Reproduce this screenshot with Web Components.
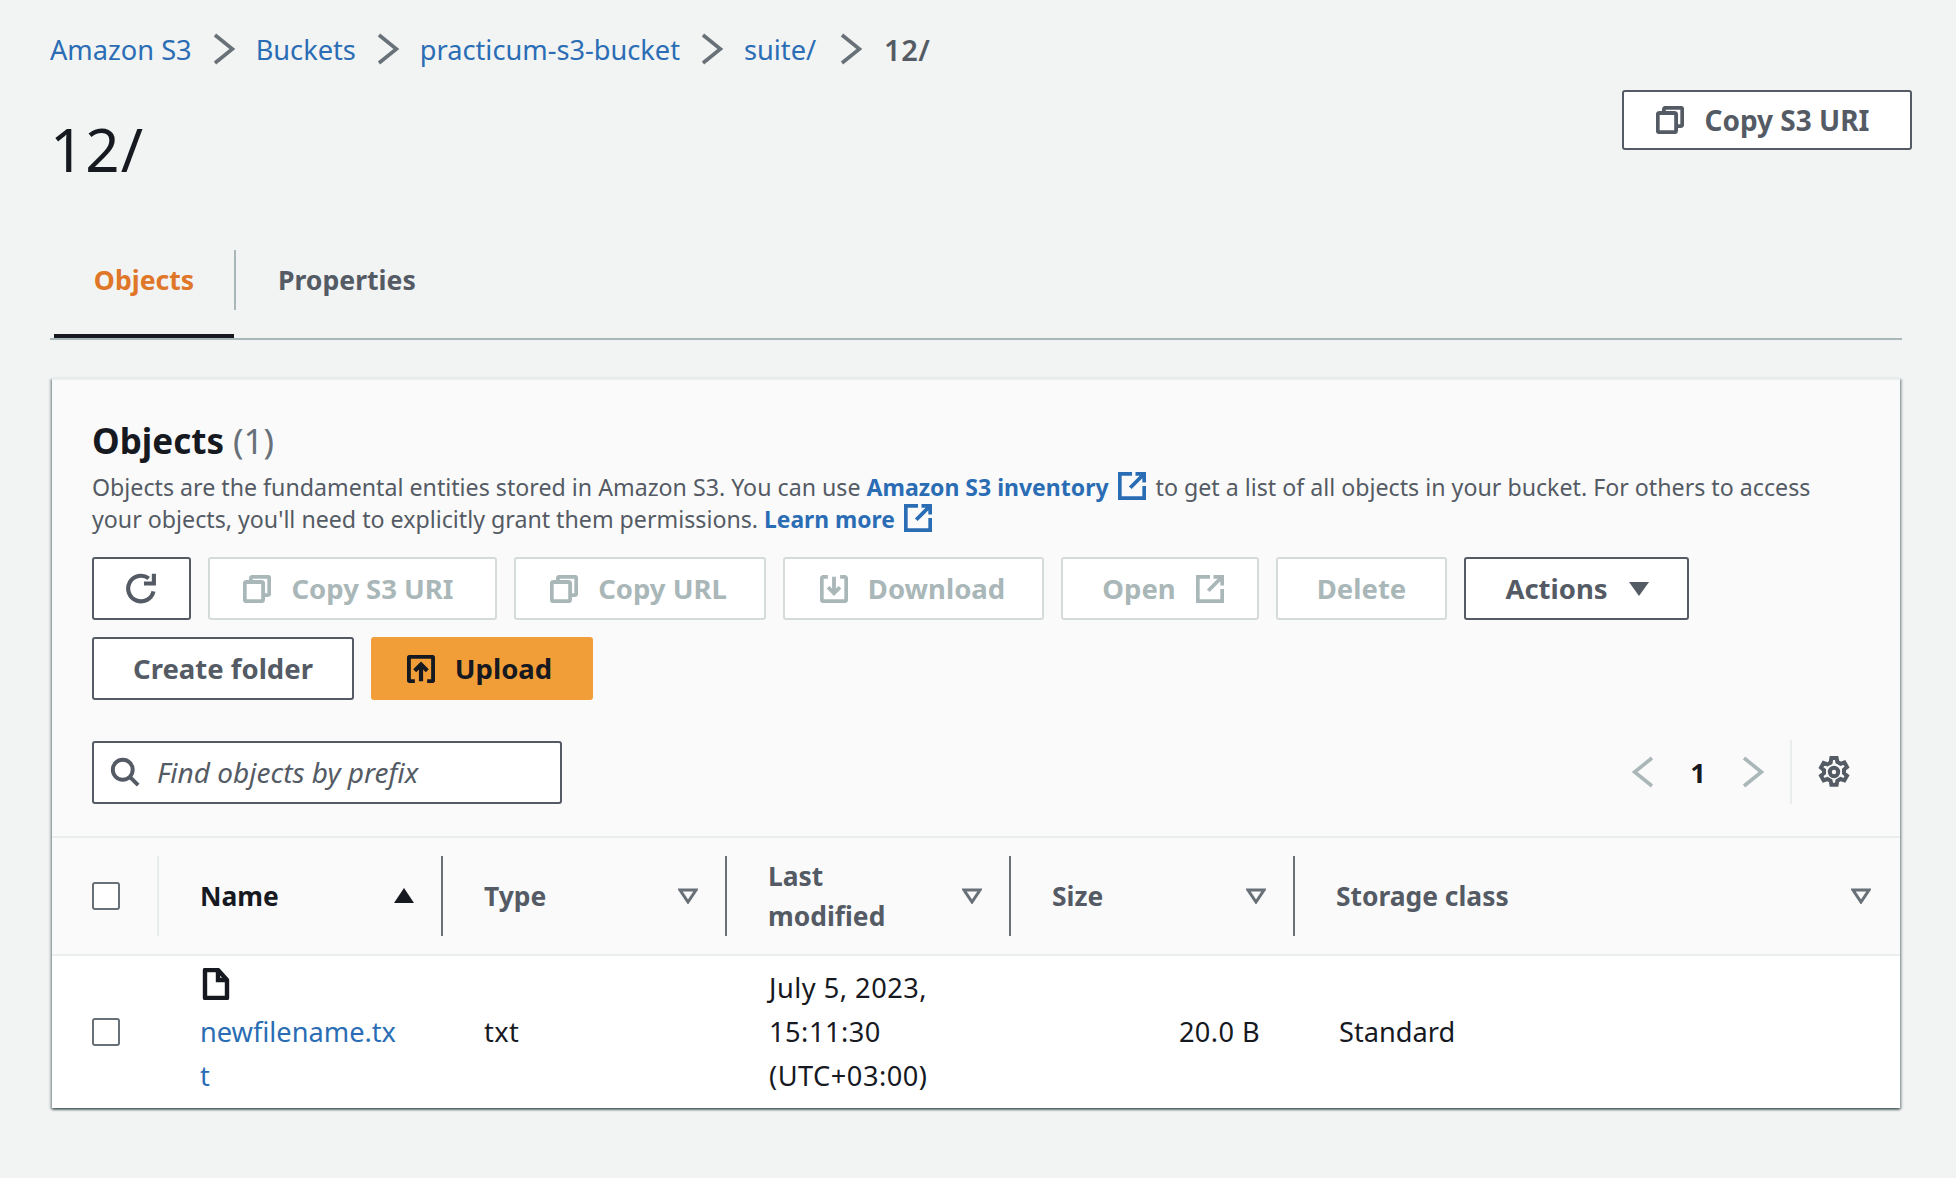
<!DOCTYPE html>
<html lang="en">
<head>
<meta charset="utf-8">
<title>12/ - S3 bucket</title>
<style>
  html, body { margin: 0; background: #f2f3f3; }
  body { font-family: "Noto Sans", "Liberation Sans", sans-serif; color: #16191f; }
</style>
</head>
<body>
<s3-page>
  <s3-breadcrumbs></s3-breadcrumbs>
  <s3-header title="12/"></s3-header>
  <s3-tabs></s3-tabs>
  <s3-panel>
    <s3-toolbar slot="toolbar"></s3-toolbar>
    <s3-filter slot="filter"></s3-filter>
    <s3-table slot="table"></s3-table>
  </s3-panel>
</s3-page>

<script>
const ICONS = {
  copy: '<path d="M4.500 4V2c0-.6.4-1 1-1H14c.6 0 1 .4 1 1v8.500c0 .6-.4 1-1 1h-2.500" fill="none"/><rect x="1" y="4" width="10.500" height="11" rx="1" fill="none"/>',
  refresh: '<path d="M13.800 9.400A6.200 6.200 0 1 1 11.500 3.100" fill="none"/><path d="M14 .8v4.800H9.200" fill="none"/>',
  download: '<path d="M4.500 1H2.200C1.500 1 1 1.500 1 2.200v11.600c0 .7.5 1.200 1.200 1.200h11.600c.7 0 1.200-.5 1.200-1.200V2.200c0-.7-.5-1.200-1.200-1.200h-2.300" fill="none"/><path d="M8 1v9M4.600 7 8 10.400 11.400 7" fill="none"/>',
  external: '<path d="M8 1H1v14h14V8" fill="none"/><path d="M7 9 15 1M10 1h5v5" fill="none"/>',
  upload: '<path d="M4.500 15H2.200C1.500 15 1 14.500 1 13.800V2.200C1 1.500 1.500 1 2.200 1h11.600c.7 0 1.200.5 1.200 1.200v11.600c0 .7-.5 1.200-1.200 1.200h-2.300" fill="none"/><path d="M8 15V5.500M4.400 9 8 5.400 11.600 9" fill="none"/>',
  search: '<circle cx="6.800" cy="6.800" r="5.300" fill="none"/><path d="M10.700 10.700 15 15" fill="none"/>',
  gear: '<path d="M6.700 1h2.600l.4 2 1.600.9 1.900-.7 1.300 2.300-1.500 1.300v1.800l1.500 1.300-1.300 2.300-1.900-.7-1.600.9-.4 2H6.700l-.4-2-1.600-.9-1.900.7-1.300-2.300 1.500-1.300V7.100L1.500 5.800l1.300-2.300 1.900.7 1.600-.9z" fill="none"/><circle cx="8" cy="8" r="2.100" fill="none"/>',
  file: '<path d="M2.500 1H9l4.500 5v9h-11z" fill="none" stroke-linejoin="round"/><path d="M9 1v5h4.500" fill="none"/>',
  left: '<path d="M12.500 1 3.800 8l8.700 7" fill="none"/>',
  right: '<path d="M3.500 1 12.200 8l-8.700 7" fill="none"/>',
};

function icon(name, size, stroke = 2) {
  return `<svg width="${size}" height="${size}" viewBox="0 0 16 16" stroke="currentColor" stroke-width="${stroke}" aria-hidden="true">${ICONS[name]}</svg>`;
}

class S3Page extends HTMLElement {
  constructor() {
    super();
    this.attachShadow({ mode: 'open' });
    this.shadowRoot.innerHTML = `
      <style>
        :host { display: block; padding: 27px 44px 69px 50px; font-size: 27.2px; }
      </style>
      <slot></slot>
    `;
  }
}

class S3Breadcrumbs extends HTMLElement {
  constructor() {
    super();
    this.attachShadow({ mode: 'open' });
    const parts = ['Amazon S3', 'Buckets', 'practicum-s3-bucket', 'suite/'];
    this.shadowRoot.innerHTML = `
      <style>
        :host { display: flex; align-items: center; height: 44px; color: #687078; }
        a { color: #2a6db5; text-decoration: none; }
        svg { margin: 0 16px; display: block; }
        a:nth-of-type(4) + svg { margin-left: 19px; margin-right: 15px; }
        span { margin-left: 2px; color: #545b64; font-weight: 600; font-size: 29px; letter-spacing: .5px; }
      </style>
      ${parts.map(p => `<a href="#">${p}</a>${icon('right', 32, 1.8)}`).join('')}
      <span>12/</span>
    `;
  }
}

class S3Button extends HTMLElement {
  constructor() {
    super();
    this.attachShadow({ mode: 'open' });
    this.shadowRoot.innerHTML = `
      <style>
        :host { display: inline-flex; box-sizing: border-box; height: 63px; padding: 0 40px; align-items: center; justify-content: center;
          gap: 20px; border: 2px solid #545b64; border-radius: 3px; background: #fff; color: #545b64;
          font-weight: 700; font-size: 27.500px; white-space: nowrap; }
        :host([disabled]) { border-color: #d5dbdb; color: #aab7b8; }
        :host([primary]) { background: #f29e38; border-color: #f29e38; color: #16191f; }
        ::slotted(svg) { display: block; flex: none; }
      </style>
      <slot></slot>
    `;
  }
}

class S3Header extends HTMLElement {
  constructor() {
    super();
    this.attachShadow({ mode: 'open' });
    this.shadowRoot.innerHTML = `
      <style>
        :host { display: flex; justify-content: space-between; align-items: flex-start; height: 100px; margin-top: 19px; }
        h1 { margin: 27px 0 0 0; font-size: 60px; line-height: 64px; font-weight: 400; letter-spacing: 1px; }
        s3-button { height: 60px; width: 290px; padding: 0 8px 0 0; font-size: 28px; }
      </style>
      <h1>${this.getAttribute('title')}</h1>
      <s3-button>${icon('copy', 28, 2.2)}<span>Copy S3 URI</span></s3-button>
    `;
  }
}

class S3Tabs extends HTMLElement {
  constructor() {
    super();
    this.attachShadow({ mode: 'open' });
    this.shadowRoot.innerHTML = `
      <style>
        :host { display: flex; height: 89px; margin: 60px 10px 39px 4px; position: relative; font-weight: 700; font-size: 26.600px; box-sizing: border-box; }
        :host::after { content: ""; position: absolute; left: -4px; right: 0; top: 88px; height: 2px; background: #aab7b8; }
        .tab { height: 84px; display: flex; align-items: flex-start; padding-top: 12px; box-sizing: border-box; }
        .tab span { display: block; line-height: 36px; }
        .active { width: 180px; justify-content: center; color: #e07628; border-bottom: 4px solid #16191f; height: 88px; }
        .sep { width: 2px; height: 60px; background: #aab7b8; }
        .other { padding-left: 42px; color: #545b64; }
      </style>
      <div class="tab active"><span>Objects</span></div>
      <div class="sep"></div>
      <div class="tab other"><span>Properties</span></div>
    `;
  }
}

class S3Panel extends HTMLElement {
  constructor() {
    super();
    this.attachShadow({ mode: 'open' });
    this.shadowRoot.innerHTML = `
      <style>
        :host { display: block; margin: 0 12px 0 2px; background: #fafafa; border-top: 2px solid #eaeded;
          box-shadow: 0 2px 2px 0 rgba(0,28,36,.5), 2px 1px 2px 0 rgba(0,28,36,.25), -2px 1px 2px 0 rgba(0,28,36,.25); }
        .head { padding: 39px 42px 0 40px; }
        h2 { margin: 0; font-size: 35px; line-height: 44px; font-weight: 700; }
        h2 span { font-weight: 400; color: #687078; }
        .desc { margin: 8px 0 0; font-size: 23.200px; line-height: 32px; color: #545b64; }
        .desc span { display: block; white-space: nowrap; }
        a { color: #2a6db5; font-weight: 700; font-size: 23px; text-decoration: none; white-space: nowrap; }
        a svg { vertical-align: -4px; margin: 0 4px 0 3px; }
        .desc span:last-child a { font-size: 22.800px; }
      </style>
      <div class="head">
        <h2>Objects <span>(1)</span></h2>
        <div class="desc">
          <span>Objects are the fundamental entities stored in Amazon S3. You can use <a href="#">Amazon S3 inventory ${icon('external', 28, 2.2)}</a> to get a list of all objects in your bucket. For others to access</span>
          <span>your objects, you'll need to explicitly grant them permissions. <a href="#">Learn more ${icon('external', 28, 2.2)}</a></span>
        </div>
        <slot name="toolbar"></slot>
        <slot name="filter"></slot>
      </div>
      <slot name="table"></slot>
    `;
  }
}

class S3Toolbar extends HTMLElement {
  constructor() {
    super();
    this.attachShadow({ mode: 'open' });
    this.shadowRoot.innerHTML = `
      <style>
        :host { display: flex; flex-wrap: wrap; gap: 17px; margin-top: 21px; }
      </style>
      <s3-button style="width:99px;padding:0">${icon('refresh', 33, 2)}</s3-button>
      <s3-button disabled style="width:289px;padding:0 8px 0 0">${icon('copy', 28, 2.2)}<span>Copy S3 URI</span></s3-button>
      <s3-button disabled style="width:252px;padding:0 3px 0 0">${icon('copy', 28, 2.2)}<span>Copy URL</span></s3-button>
      <s3-button disabled style="width:261px;padding:0 2px 0 0">${icon('download', 28, 2.2)}<span>Download</span></s3-button>
      <s3-button disabled style="width:198px;padding:0 0 0 6px"><span>Open</span>${icon('external', 28, 2.2)}</s3-button>
      <s3-button disabled style="width:171px;padding:0"><span>Delete</span></s3-button>
      <s3-button style="width:225px;padding:0 0 0 2px"><span>Actions</span><svg width="22" height="16" viewBox="0 0 22 16"><path d="M1 1h20L11 15z" fill="currentColor"/></svg></s3-button>
      <s3-button style="width:262px;padding:0"><span>Create folder</span></s3-button>
      <s3-button primary style="width:222px;padding:0 5px 0 0">${icon('upload', 28, 2.4)}<span>Upload</span></s3-button>
    `;
  }
}

class S3Filter extends HTMLElement {
  constructor() {
    super();
    this.attachShadow({ mode: 'open' });
    this.shadowRoot.innerHTML = `
      <style>
        :host { display: flex; align-items: center; justify-content: space-between; height: 64px; margin-top: 40px; }
        .search { box-sizing: border-box; width: 470px; height: 63px; display: flex; align-items: center; gap: 17px;
          padding-left: 16px; background: #fff; border: 2px solid #545b64; border-radius: 3px; color: #545b64; }
        .search em { font-size: 28px; color: #545b64; }
        .search svg { display: block; }
        .pager { display: flex; align-items: center; height: 64px; padding-right: 8px; }
        .pager svg { display: block; color: #aab7b8; }
        .pager b { width: 78px; text-align: center; font-weight: 700; font-size: 27.200px; color: #16191f; }
        .sep { width: 2px; height: 64px; background: #eaeded; margin: 0 26px 0 21px; }
        .pager .gear svg { color: #545b64; }
      </style>
      <div class="search">${icon('search', 30, 2.1)}<em>Find objects by prefix</em></div>
      <div class="pager">
        ${icon('left', 32, 1.8)}
        <b>1</b>
        ${icon('right', 32, 1.8)}
        <div class="sep"></div>
        <span class="gear">${icon('gear', 32, 2)}</span>
      </div>
    `;
  }
}

class S3Table extends HTMLElement {
  constructor() {
    super();
    this.attachShadow({ mode: 'open' });
    const sortDown = '<svg class="sort" width="20" height="16" viewBox="0 0 20 16"><path d="M2 2h16l-8 12z" fill="none" stroke="#687078" stroke-width="3"/></svg>';
    const sortUp = '<svg class="sort" width="20" height="16" viewBox="0 0 20 16"><path d="M10 0 20 15H0z" fill="#16191f"/></svg>';
    const headers = [
      ['Name', sortUp, 'active'],
      ['Type', sortDown, ''],
      ['Last<br>modified', sortDown, ''],
      ['Size', sortDown, ''],
      ['Storage class', sortDown, 'end'],
    ];
    this.shadowRoot.innerHTML = `
      <style>
        :host { display: grid; grid-template-columns: 107px 284px 284px 284px 284px 1fr; margin-top: 32px; font-size: 27.200px; }
        .h { background: #fafafa; border-top: 2px solid #eaeded; border-bottom: 2px solid #eaeded; height: 120px; box-sizing: border-box;
          padding: 18px 0; font-weight: 700; font-size: 26.400px; color: #545b64; }
        .h .in { height: 80px; display: flex; align-items: center; justify-content: space-between; box-sizing: border-box;
          padding: 0 27px 0 41px; border-right: 2px solid #687078; line-height: 40px; }
        .h.end .in { border-right: 0; padding-right: 29px; }
        .h.check .in { border-right-color: #eaeded; padding: 0 0 0 40px; }
        .h.active .in { padding-right: 27px; color: #16191f; }
        .sort { display: block; flex: none; }
        .box { display: block; box-sizing: border-box; width: 28px; height: 28px; background: #fff; border: 2px solid #687078; border-radius: 3px; }
        .c { background: #fff; height: 152px; padding: 0 0 0 41px; box-sizing: border-box; line-height: 44px; display: flex; flex-direction: column; justify-content: center; }
        .c.check { padding-left: 40px; }
        .c a { color: #2a6db5; text-decoration: none; }
        .file { height: 44px; display: flex; align-items: flex-start; color: #16191f; }
        .file svg { display: block; margin: 2px 0 0 0; }
        .date { letter-spacing: .5px; padding-left: 42px; }
        .num { padding: 0; align-items: flex-end; letter-spacing: .4px; }
        .num span { margin-right: 35px; }
      </style>
      <div class="h check"><div class="in"><span class="box"></span></div></div>
      ${headers.map(([t, s, cls]) => `<div class="h ${cls}"><div class="in"><span>${t}</span>${s}</div></div>`).join('')}
      <div class="c check"><span class="box"></span></div>
      <div class="c name" style="padding-right:20px"><span class="file">${icon('file', 32, 2.2)}</span><a href="#">newfilename.tx<br>t</a></div>
      <div class="c" style="letter-spacing:.4px">txt</div>
      <div class="c date"><span>July 5, 2023,<br>15:11:30<br>(UTC+03:00)</span></div>
      <div class="c num"><span>20.0 B</span></div>
      <div class="c" style="padding-left:44px">Standard</div>
    `;
  }
}

customElements.define('s3-button', S3Button);
customElements.define('s3-page', S3Page);
customElements.define('s3-breadcrumbs', S3Breadcrumbs);
customElements.define('s3-header', S3Header);
customElements.define('s3-tabs', S3Tabs);
customElements.define('s3-panel', S3Panel);
customElements.define('s3-toolbar', S3Toolbar);
customElements.define('s3-filter', S3Filter);
customElements.define('s3-table', S3Table);
</script>
</body>
</html>
